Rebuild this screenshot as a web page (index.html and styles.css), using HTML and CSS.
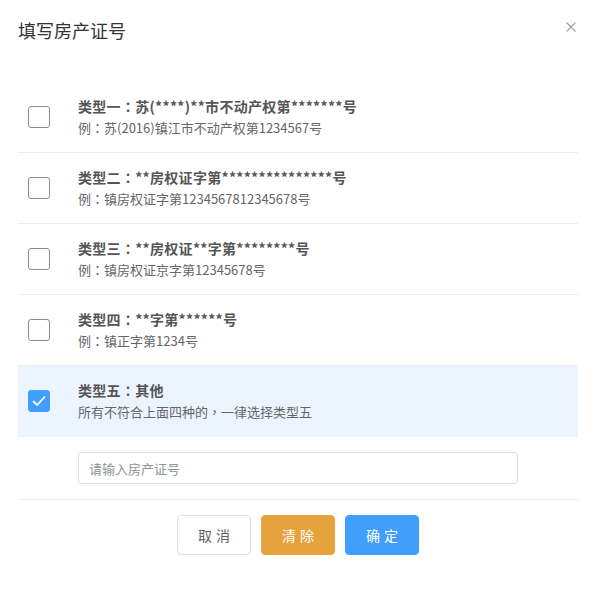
FILE: index.html
```html
<!DOCTYPE html>
<html lang="zh-CN">
<head>
<meta charset="utf-8">
<link rel="stylesheet" href="styles.css">
</head>
<body>
<div class="dialog">
  <div class="header">
    <span class="title">填写房产证号</span>
    <span class="close"><svg width="10" height="10" viewBox="0 0 10 10"><path d="M0.5 0.5L9.5 9.5M9.5 0.5L0.5 9.5" stroke="#a0a0a0" stroke-width="1.1" fill="none"/></svg></span>
  </div>
  <div class="body">
    <div class="row">
      <span class="box"></span>
      <div class="text">
        <div class="name">类型一<span class="colon" lang="zh-TW">：</span>苏(****)**市不动产权第*******号</div>
        <div class="eg">例<span class="colon" lang="zh-TW">：</span>苏(2016)镇江市不动产权第1234567号</div>
      </div>
    </div>
    <div class="row">
      <span class="box"></span>
      <div class="text">
        <div class="name">类型二<span class="colon" lang="zh-TW">：</span>**房权证字第***************号</div>
        <div class="eg">例<span class="colon" lang="zh-TW">：</span>镇房权证字第1234567812345678号</div>
      </div>
    </div>
    <div class="row">
      <span class="box"></span>
      <div class="text">
        <div class="name">类型三<span class="colon" lang="zh-TW">：</span>**房权证**字第********号</div>
        <div class="eg">例<span class="colon" lang="zh-TW">：</span>镇房权证京字第12345678号</div>
      </div>
    </div>
    <div class="row">
      <span class="box"></span>
      <div class="text">
        <div class="name">类型四<span class="colon" lang="zh-TW">：</span>**字第******号</div>
        <div class="eg">例<span class="colon" lang="zh-TW">：</span>镇正字第1234号</div>
      </div>
    </div>
    <div class="row active">
      <span class="box checked"><svg width="14" height="12" viewBox="0 0 14 12"><path d="M1.5 6.5L5.2 10L12.5 2" stroke="#fff" stroke-width="1.8" fill="none" stroke-linecap="round" stroke-linejoin="round"/></svg></span>
      <div class="text">
        <div class="name">类型五<span class="colon" lang="zh-TW">：</span>其他</div>
        <div class="eg">所有不符合上面四种的<span class="colon" lang="zh-TW">，</span>一律选择类型五</div>
      </div>
    </div>
    <div class="input-row">
      <input class="input" type="text" placeholder="请输入房产证号">
    </div>
    <div class="footer">
      <button class="btn cancel">取消</button>
      <button class="btn warn">清除</button>
      <button class="btn primary">确定</button>
    </div>
  </div>
</div>
</body>
</html>
```

FILE: styles.css
```css
html, body {
  margin: 0;
  padding: 0;
  background: #fff;
}
body {
  font-family: "Microsoft YaHei", "Noto Sans CJK SC", "Noto Sans", sans-serif;
  color: #606266;
}
.dialog {
  width: 595px;
}
.header {
  display: flex;
  justify-content: space-between;
  align-items: center;
  padding: 17px 19px 0 18px;
  height: 26px;
}
.title {
  font-size: 18px;
  color: #333;
  line-height: 24px;
}
.close {
  display: flex;
  align-items: center;
  margin-top: -6px;
}
.body {
  padding: 39px 17px 0 18px;
}
.row {
  display: flex;
  align-items: center;
  height: 70px;
  border-bottom: 1px solid #ebeef5;
  padding-left: 10px;
}
.row.active {
  background: #ecf5ff;
  border-bottom-color: #ecf5ff;
}
.box {
  width: 20px;
  height: 20px;
  border: 1px solid #8c8c8c;
  border-radius: 3px;
  box-sizing: content-box;
  flex: none;
  display: flex;
  align-items: center;
  justify-content: center;
  background: #fff;
}
.box.checked {
  background: #409eff;
  border-color: #409eff;
}
.text {
  margin-left: 28px;
  display: flex;
  flex-direction: column;
  gap: 2px;
}
.name {
  font-size: 14px;
  font-weight: bold;
  color: #555;
  line-height: 20px;
  letter-spacing: 0.3px;
}
.eg {
  font-size: 13px;
  color: #666;
  line-height: 20px;
}
.colon {
  font-family: "Noto Sans CJK TC", "Noto Sans CJK SC", sans-serif;
}
.input-row {
  padding: 15px 0 15px 60px;
  border-bottom: 1px solid #ebeef5;
}
.input {
  display: block;
  width: 440px;
  height: 32px;
  box-sizing: border-box;
  border: 1px solid #dcdfe6;
  border-radius: 3px;
  padding: 0 10px;
  font-family: inherit;
  font-size: 13px;
  color: #606266;
  outline: none;
}
.input::placeholder {
  color: #909399;
}
.footer {
  display: flex;
  justify-content: center;
  gap: 10px;
  padding-top: 15px;
}
.btn {
  width: 74px;
  height: 40px;
  border-radius: 4px;
  font-family: inherit;
  font-size: 14px;
  letter-spacing: 4px;
  text-indent: 4px;
  border: 1px solid transparent;
  cursor: pointer;
  padding: 0;
}
.cancel {
  background: #fff;
  border-color: #dcdfe6;
  color: #606266;
}
.warn {
  background: #e6a23c;
  border-color: #e6a23c;
  color: #fff;
}
.primary {
  background: #409eff;
  border-color: #409eff;
  color: #fff;
}
```
